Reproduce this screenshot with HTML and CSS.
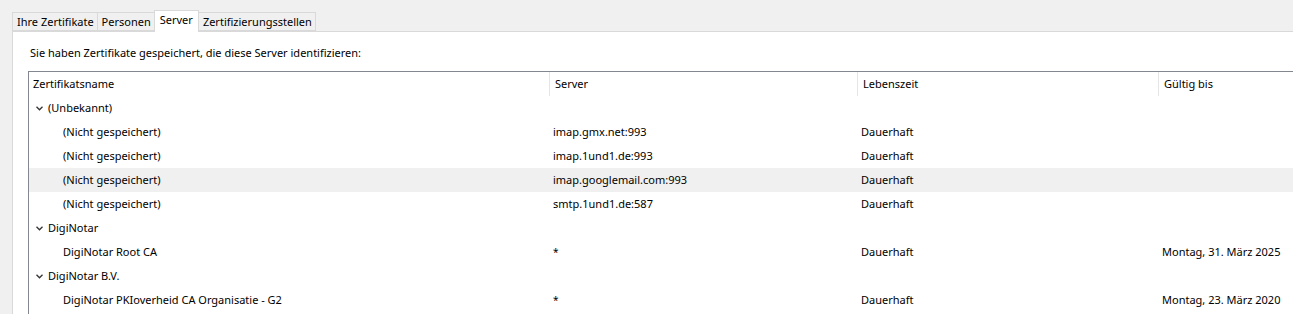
FILE: index.html
```html
<!DOCTYPE html>
<html lang="de">
<head>
<meta charset="utf-8">
<title>Zertifikate</title>
<link rel="stylesheet" href="styles.css">
</head>
<body>
<div class="window">
  <div class="tabs">
    <div class="tab">Ihre Zertifikate</div>
    <div class="tab">Personen</div>
    <div class="tab active">Server</div>
    <div class="tab">Zertifizierungsstellen</div>
  </div>
  <div class="panel">
    <p class="intro">Sie haben Zertifikate gespeichert, die diese Server identifizieren:</p>
    <div class="list">
      <div class="row head">
        <div class="c c1">Zertifikatsname</div>
        <div class="c c2 sep">Server</div>
        <div class="c c3 sep">Lebenszeit</div>
        <div class="c c4 sep">Gültig bis</div>
      </div>
      <div class="row">
        <div class="c c1 group"><svg class="chev" width="7" height="5" viewBox="0 0 7 5"><polyline points="0.5,0.8 3.5,3.8 6.5,0.8" fill="none" stroke="#333" stroke-width="1.3"/></svg>(Unbekannt)</div>
        <div class="c c2"></div><div class="c c3"></div><div class="c c4"></div>
      </div>
      <div class="row">
        <div class="c c1 child">(Nicht gespeichert)</div>
        <div class="c c2">imap.gmx.net:993</div><div class="c c3">Dauerhaft</div><div class="c c4"></div>
      </div>
      <div class="row">
        <div class="c c1 child">(Nicht gespeichert)</div>
        <div class="c c2">imap.1und1.de:993</div><div class="c c3">Dauerhaft</div><div class="c c4"></div>
      </div>
      <div class="row hover">
        <div class="c c1 child">(Nicht gespeichert)</div>
        <div class="c c2">imap.googlemail.com:993</div><div class="c c3">Dauerhaft</div><div class="c c4"></div>
      </div>
      <div class="row">
        <div class="c c1 child">(Nicht gespeichert)</div>
        <div class="c c2">smtp.1und1.de:587</div><div class="c c3">Dauerhaft</div><div class="c c4"></div>
      </div>
      <div class="row">
        <div class="c c1 group"><svg class="chev" width="7" height="5" viewBox="0 0 7 5"><polyline points="0.5,0.8 3.5,3.8 6.5,0.8" fill="none" stroke="#333" stroke-width="1.3"/></svg>DigiNotar</div>
        <div class="c c2"></div><div class="c c3"></div><div class="c c4"></div>
      </div>
      <div class="row">
        <div class="c c1 child">DigiNotar Root CA</div>
        <div class="c c2"><span class="star">*</span></div><div class="c c3">Dauerhaft</div><div class="c c4">Montag, 31. März 2025</div>
      </div>
      <div class="row">
        <div class="c c1 group"><svg class="chev" width="7" height="5" viewBox="0 0 7 5"><polyline points="0.5,0.8 3.5,3.8 6.5,0.8" fill="none" stroke="#333" stroke-width="1.3"/></svg>DigiNotar B.V.</div>
        <div class="c c2"></div><div class="c c3"></div><div class="c c4"></div>
      </div>
      <div class="row">
        <div class="c c1 child">DigiNotar PKIoverheid CA Organisatie - G2</div>
        <div class="c c2"><span class="star">*</span></div><div class="c c3">Dauerhaft</div><div class="c c4">Montag, 23. März 2020</div>
      </div>
    </div>
  </div>
</div>
</body>
</html>
```
FILE: styles.css
```css
html, body {
  margin: 0;
  padding: 0;
  background: #f0f0f0;
  height: 314px;
  overflow: hidden;
}
body {
  font-family: "Noto Sans", "Open Sans", sans-serif;
  font-size: 11px;
  color: #000;
}
.window {
  padding: 12px 0 0 12px;
}
.tabs {
  display: flex;
  height: 19px;
  position: relative;
  z-index: 1;
}
.tab {
  box-sizing: border-box;
  height: 19px;
  padding: 0 3px 0 4px;
  border: 1px solid #d9d9d9;
  border-right: none;
  background: #f0f0f0;
  line-height: 17px;
  white-space: nowrap;
}
.tab:last-child {
  border-right: 1px solid #d9d9d9;
}
.tab.active {
  background: #fff;
  height: 22px;
  margin-top: -2px;
  padding: 0 5px 0 5px;
  line-height: 18px;
  border-bottom: none;
  border-right: 1px solid #d9d9d9;
}
.tab.active + .tab {
  border-left: none;
}
.panel {
  background: #fff;
  border-top: 1px solid #d9d9d9;
  border-left: 1px solid #d9d9d9;
  height: 282px;
  padding: 0 0 0 15px;
}
.intro {
  margin: 0;
  padding: 13px 0 0 2px;
  height: 26px;
  line-height: 16px;
}
.list {
  border-top: 1px solid #828790;
  border-left: 1px solid #828790;
  height: 243px;
}
.row {
  display: flex;
  height: 24px;
  line-height: 24px;
}
.row.hover {
  background: #f0f0f0;
}
.c {
  box-sizing: border-box;
  white-space: nowrap;
  overflow: hidden;
}
.c1 { width: 520px; padding-left: 34px; }
.c2 { width: 308px; padding-left: 4px; }
.c3 { width: 301px; padding-left: 4px; }
.c4 { flex: 1; padding-left: 4px; }
.head .c1 { padding-left: 4px; }
.head .c2, .head .c3, .head .c4 { padding-left: 5px; }
.head .sep { border-left: 1px solid #e5e5e5; }
.group {
  padding-left: 7px;
  display: flex;
  align-items: center;
}
.chev {
  margin-right: 5px;
  margin-top: 1px;
}
.star {
  font-size: 10px;
}
```
